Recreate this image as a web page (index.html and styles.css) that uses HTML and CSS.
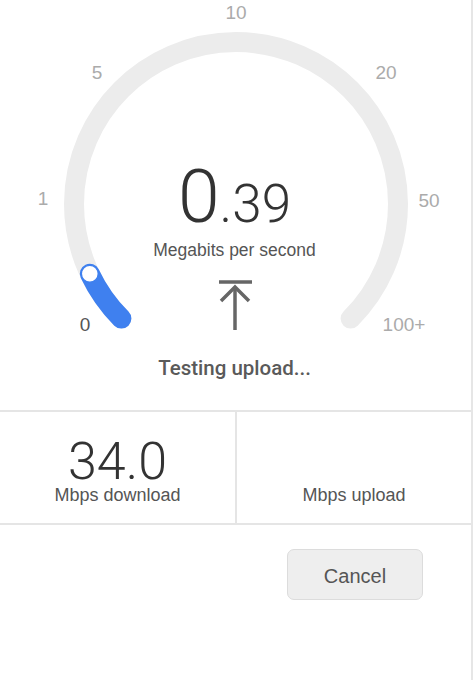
FILE: index.html
```html
<!DOCTYPE html>
<html lang="en">
<head>
    <meta charset="UTF-8">
    <meta name="viewport" content="width=device-width, initial-scale=1.0">
    <title>Speed Test</title>
    <link rel="stylesheet" href="styles.css">
</head>
<body>

    <div class="app">
        <div class="gauge">
            <!-- dial: track, progress and scale labels -->
            <svg class="dial" width="471" height="345" viewBox="0 0 471 345">
                <path class="track" d="M 121.4 318.6 A 162 162 0 1 1 350.6 318.6"/>
                <path class="progress" d="M 121.4 318.6 A 162 162 0 0 1 89.8 273.7"/>
                <circle class="handle" cx="89.8" cy="273.7" r="8.5"/>
                <text class="tick" x="236" y="19">10</text>
                <text class="tick" x="97" y="79">5</text>
                <text class="tick" x="386" y="79">20</text>
                <text class="tick" x="43" y="205">1</text>
                <text class="tick" x="429" y="207">50</text>
                <text class="tick active" x="85" y="331">0</text>
                <text class="tick" x="404" y="331">100+</text>
            </svg>

            <div class="readout">
                <div class="speed">0<span class="decimals">.39</span></div>
                <p class="unit">Megabits per second</p>
                <svg class="upload_icon" width="40" height="52" viewBox="0 0 40 52">
                    <line x1="4" y1="4" x2="37" y2="4"/>
                    <polyline points="6,23 20,9 34,23" fill="none"/>
                    <line x1="20" y1="9" x2="20" y2="52"/>
                </svg>
            </div>
        </div>

        <p class="status">Testing upload...</p>

        <div class="stats">
            <div class="stat stat_left">
                <div class="stat_value">34.0</div>
                <p class="stat_label">Mbps download</p>
            </div>
            <div class="stat">
                <div class="stat_value"></div>
                <p class="stat_label">Mbps upload</p>
            </div>
        </div>

        <div class="actions">
            <button class="cancel">Cancel</button>
        </div>
    </div>

</body>
</html>
```

FILE: styles.css
```css
* {
    margin: 0px;
    padding: 0px;
    box-sizing: border-box;
}

body {
    background-color: #ffffff;
    font-family: "Liberation Sans", Arial, sans-serif;
}

.app {
    width: 473px;
    height: 680px;
    border-right: 2px solid #e6e6e6;
}

.gauge {
    display: grid;
    height: 345px;
}

.dial, .readout {
    grid-area: 1 / 1;
}

.track, .progress {
    fill: none;
    stroke-width: 20;
    stroke-linecap: round;
}

.track {
    stroke: #ececec;
}

.progress {
    stroke: #3f80ef;
}

.handle {
    fill: #ffffff;
    stroke: #3f80ef;
    stroke-width: 1.5;
}

.tick {
    font-family: "Liberation Sans", Arial, sans-serif;
    font-size: 19px;
    fill: #ababab;
    text-anchor: middle;
}

.tick.active {
    fill: #555555;
}

.readout {
    display: flex;
    flex-direction: column;
    align-items: center;
    padding-top: 159px;
    padding-right: 2px;
}

.speed {
    font-family: Roboto, sans-serif;
    font-weight: 300;
    font-size: 75px;
    line-height: 1;
    color: #333333;
}

.decimals {
    font-size: 53px;
}

.unit {
    margin-top: 6px;
    font-size: 17.5px;
    line-height: 20px;
    color: #555555;
}

.upload_icon {
    margin-top: 18px;
    stroke: #666666;
    stroke-width: 3.5;
}

.status {
    padding: 11px 2px 30px 0px;
    text-align: center;
    font-family: Roboto, sans-serif;
    font-weight: 500;
    font-size: 20.5px;
    line-height: 24px;
    color: #5a5a5a;
}

.stats {
    display: grid;
    grid-template-columns: 237px 1fr;
    height: 115px;
    border-top: 2px solid #e5e5e5;
    border-bottom: 2px solid #e5e5e5;
}

.stat {
    display: flex;
    flex-direction: column;
    align-items: center;
    padding-top: 27px;
}

.stat_left {
    border-right: 2px solid #e5e5e5;
}

.stat_value {
    height: 46px;
    font-family: Roboto, sans-serif;
    font-weight: 300;
    font-size: 52px;
    line-height: 45px;
    color: #333333;
}

.stat_label {
    font-size: 18px;
    line-height: 20px;
    color: #555555;
}

.actions {
    display: flex;
    justify-content: flex-end;
    padding: 24px 48px 0px 0px;
}

.cancel {
    width: 136px;
    height: 51px;
    padding-top: 3px;
    border: 1px solid #dcdcdc;
    border-radius: 7px;
    background-color: #eeeeee;
    font-family: "Liberation Sans", Arial, sans-serif;
    font-size: 20px;
    color: #555555;
    cursor: pointer;
}
```
